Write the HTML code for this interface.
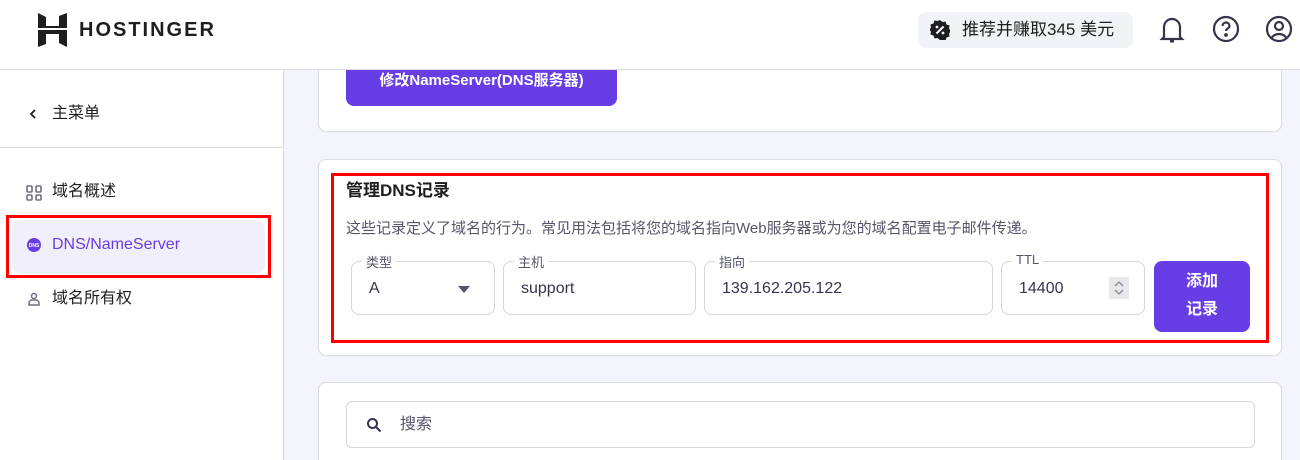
<!DOCTYPE html>
<html><head><meta charset="utf-8"><style>
*{box-sizing:border-box;margin:0;padding:0}
html,body{width:1300px;height:460px;overflow:hidden}
body{background:#f4f4fd;font-family:"Liberation Sans","Noto Sans CJK SC",sans-serif;color:#1d1e20;position:relative}
.abs{position:absolute}
.hdr{left:0;top:0;width:1300px;height:70px;background:#fff;border-bottom:1px solid #dadce0;z-index:5}
.side{left:0;top:70px;width:284px;height:390px;background:#fff;border-right:1px solid #dadce0}
.card{background:#fff;border:1px solid #dadce0;border-radius:8px}
.fld{border:1px solid #d5d5dc;border-radius:8px;height:54px;top:261px;background:#fff;font-size:16px;color:#36344d;padding:18px 0 0 17px}
.lbl{position:absolute;top:-10px;left:10px;background:#fff;padding:0 4px;font-size:13px;color:#55566a}
</style></head><body>
<div class="abs hdr">
<svg class="abs" style="left:38px;top:13px" width="29" height="34" viewBox="0 0 29 34"><path d="M0 0l8 4v9l13 0V3l8-3v15H0z M0 17h29v17l-8-4V21H8v10l-8 3z" fill="#1d1e20"/></svg>
<div class="abs" style="left:79px;top:19px;font-size:20px;font-weight:bold;letter-spacing:2px">HOSTINGER</div>
<div class="abs" style="left:918px;top:12px;width:215px;height:36px;background:#f2f3f6;border-radius:8px"></div>
<svg class="abs" style="left:930px;top:20px" width="20" height="20" viewBox="0 0 20 20"><path d="M10 0l2.5 2 3-.5 1 3 3 1-.5 3 2 2.5-2 2.5.5 3-3 1-1 3-3-.5L10 20l-2.5-2-3 .5-1-3-3-1 .5-3L-1 10l2-2.5-.5-3 3-1 1-3 3 .5z" fill="#1d1e20"/><path d="M6.5 13.5l7-7" stroke="#fff" stroke-width="2"/><circle cx="7" cy="7" r="1.4" fill="#fff"/><circle cx="13" cy="13" r="1.4" fill="#fff"/></svg>
<div class="abs" style="left:962px;top:20px;font-size:17px;line-height:20px">推荐并赚取345 美元</div>
<svg class="abs" style="left:1158px;top:15px" width="28" height="30" viewBox="0 0 28 30" fill="none" stroke="#36344d" stroke-width="2.2"><path d="M6 22V12a8 8 0 0116 0v10l2 2H4z"/><path d="M12 26h4" stroke-width="3"/></svg>
<svg class="abs" style="left:1212px;top:15px" width="28" height="28" viewBox="0 0 28 28" fill="none" stroke="#36344d" stroke-width="2.2"><circle cx="14" cy="14" r="12"/><path d="M10.5 11a3.5 3.5 0 117 0c0 2.5-3.5 2.5-3.5 5"/><circle cx="14" cy="20" r=".8" fill="#36344d"/></svg>
<svg class="abs" style="left:1265px;top:15px" width="28" height="28" viewBox="0 0 28 28" fill="none" stroke="#36344d" stroke-width="2.2"><circle cx="14" cy="14" r="12"/><circle cx="14" cy="11" r="4"/><path d="M6.5 23a9 9 0 0115 0"/></svg>
</div>
<div class="abs side">
<svg class="abs" style="left:29px;top:39px" width="8" height="10" viewBox="0 0 8 10" fill="none" stroke="#1d1e20" stroke-width="1.8"><path d="M6 1L2 5l4 4"/></svg>
<div class="abs" style="left:52px;top:34px;font-size:16px;line-height:20px">主菜单</div>
<div class="abs" style="left:0;top:77px;width:283px;border-top:1px solid #dadce0"></div>
<svg class="abs" style="left:26px;top:115px" width="16" height="16" viewBox="0 0 16 16" fill="none" stroke="#6d7081" stroke-width="1.6"><rect x="1" y="1" width="5" height="6" rx="1"/><rect x="10" y="1" width="5" height="6" rx="1"/><rect x="1" y="10" width="5" height="5" rx="1"/><rect x="10" y="10" width="5" height="5" rx="1"/></svg>
<div class="abs" style="left:52px;top:112px;font-size:16px;line-height:20px">域名概述</div>
<div class="abs" style="left:6px;top:145px;width:265px;height:63px;border:3px solid #f00"></div>
<div class="abs" style="left:12px;top:150px;width:253px;height:53px;background:#f1effb;border-radius:8px"></div>
<svg class="abs" style="left:26px;top:167px" width="16" height="16" viewBox="0 0 16 16"><circle cx="8" cy="8" r="7" fill="#673de6"/><text x="8" y="10" font-size="5" fill="#fff" text-anchor="middle" font-family="Liberation Sans" font-weight="bold">DNS</text></svg>
<div class="abs" style="left:52px;top:165px;font-size:16px;line-height:20px;color:#673de6">DNS/NameServer</div>
<svg class="abs" style="left:27px;top:222px" width="14" height="14" viewBox="0 0 14 14" fill="none" stroke="#6d7081" stroke-width="1.5"><circle cx="7" cy="4" r="2.5"/><path d="M2 13v-2a3 3 0 013-3h4a3 3 0 013 3v2z"/></svg>
<div class="abs" style="left:52px;top:219px;font-size:16px;line-height:20px">域名所有权</div>
</div>
<div class="abs card" style="left:318px;top:40px;width:964px;height:92px"></div>
<div class="abs" style="left:346px;top:60px;width:271px;height:46px;background:#673de6;border-radius:0 0 8px 8px;color:#fff;font-weight:bold;font-size:15px;text-align:center;padding-top:12px;line-height:18px">修改NameServer(DNS服务器)</div>
<div class="abs card" style="left:318px;top:159px;width:964px;height:197px"></div>
<div class="abs" style="left:331px;top:173px;width:938px;height:170px;border:3px solid #f00"></div>
<div class="abs" style="left:346px;top:181px;font-size:17px;line-height:20px;font-weight:bold">管理DNS记录</div>
<div class="abs" style="left:346px;top:220px;font-size:15px;line-height:18px;color:#55566a">这些记录定义了域名的行为。常见用法包括将您的域名指向Web服务器或为您的域名配置电子邮件传递。</div>
<div class="abs fld" style="left:351px;width:144px"><span class="lbl">类型</span>A<svg class="abs" style="left:106px;top:24px" width="12" height="7"><path d="M0 0h12L6 7z" fill="#55566a"/></svg></div>
<div class="abs fld" style="left:503px;width:193px"><span class="lbl">主机</span>support</div>
<div class="abs fld" style="left:704px;width:289px"><span class="lbl">指向</span>139.162.205.122</div>
<div class="abs fld" style="left:1001px;width:144px"><span class="lbl">TTL</span>14400<svg class="abs" style="left:107px;top:15px" width="20" height="22" viewBox="0 0 20 22"><rect width="20" height="22" fill="#e8e8ec"/><path d="M6 9l4-4 4 4M6 13l4 4 4-4" fill="none" stroke="#888" stroke-width="1.3"/></svg></div>
<div class="abs" style="left:1154px;top:261px;width:96px;height:71px;background:#673de6;border-radius:8px;color:#fff;font-weight:bold;font-size:16px;text-align:center;line-height:28px;padding-top:7px">添加<br>记录</div>
<div class="abs card" style="left:318px;top:382px;width:964px;height:100px"></div>
<div class="abs" style="left:346px;top:401px;width:909px;height:47px;border:1px solid #d5d5dc;border-radius:6px"></div>
<svg class="abs" style="left:366px;top:417px" width="16" height="16" viewBox="0 0 16 16" fill="none" stroke="#36344d" stroke-width="2"><circle cx="6.5" cy="6.5" r="4.5"/><path d="M10 10l4.5 4.5"/></svg>
<div class="abs" style="left:400px;top:415px;font-size:16px;line-height:20px;color:#55566a">搜索</div>
</body></html>
